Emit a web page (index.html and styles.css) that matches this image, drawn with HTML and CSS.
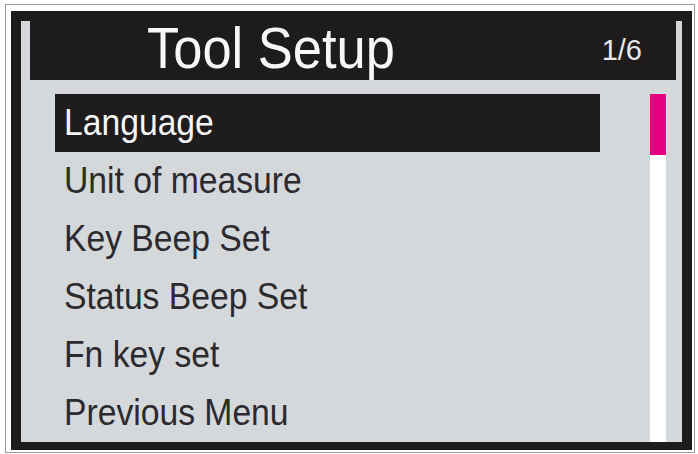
FILE: index.html
```html
<!DOCTYPE html>
<html>
<head>
<meta charset="utf-8">
<link rel="stylesheet" href="styles.css">
</head>
<body>
<div class="frame">
  <div class="bezel">
    <div class="screen">
      <div class="header">
        <span class="title">Tool Setup</span>
        <span class="page">1/6</span>
      </div>
      <div class="body">
        <ul class="menu">
          <li class="item selected"><span class="label">Language</span></li>
          <li class="item"><span class="label">Unit of measure</span></li>
          <li class="item"><span class="label">Key Beep Set</span></li>
          <li class="item"><span class="label">Status Beep Set</span></li>
          <li class="item"><span class="label">Fn key set</span></li>
          <li class="item"><span class="label">Previous Menu</span></li>
        </ul>
        <div class="track"><div class="thumb"></div></div>
      </div>
    </div>
  </div>
</div>
</body>
</html>
```
FILE: styles.css
```css
html, body {
  margin: 0;
  padding: 0;
  background: #ffffff;
}
body {
  font-family: "Liberation Sans", Arial, sans-serif;
}
.frame {
  box-sizing: border-box;
  margin: 4px 0 0 5px;
  width: 690px;
  height: 449px;
  border: 1px solid #9a9a9a;
  padding: 6px 2px 2px 5px;
}
.bezel {
  box-sizing: border-box;
  width: 681px;
  height: 439px;
  background: #1d1b1b;
  border-style: solid;
  border-color: #1d1b1b;
  border-width: 10px 10px 8px 10px;
}
.screen {
  height: 100%;
  background: #d5d8da;
  display: flex;
  flex-direction: column;
}
.header {
  height: 62px;
  margin: 0 6px 0 9px;
  background: #1d1b1b;
  display: flex;
  align-items: flex-start;
  color: #f7f7f7;
}
.title {
  margin-left: 117px;
  font-size: 57px;
  line-height: 55px;
  transform: scaleX(0.92);
  transform-origin: left center;
  white-space: nowrap;
}
.page {
  margin-left: auto;
  margin-right: 34px;
  margin-top: 15px;
  font-size: 29px;
  line-height: 29px;
  color: #e8e8ea;
}
.body {
  flex: 1;
  display: flex;
  padding-top: 14px;
}
.menu {
  list-style: none;
  margin: 0 0 0 34px;
  padding: 0;
  width: 545px;
}
.item {
  height: 58px;
  line-height: 58px;
  padding-left: 9px;
  font-size: 37px;
  color: #2a2a2f;
  white-space: nowrap;
}
.label {
  display: inline-block;
  transform: scaleX(0.91);
  transform-origin: left center;
}
.item.selected {
  background: #1e1c1c;
  color: #f6f6f6;
}
.track {
  margin-left: auto;
  margin-right: 16px;
  width: 16px;
  background: #ffffff;
}
.thumb {
  height: 61px;
  background: #e5007f;
}
```
